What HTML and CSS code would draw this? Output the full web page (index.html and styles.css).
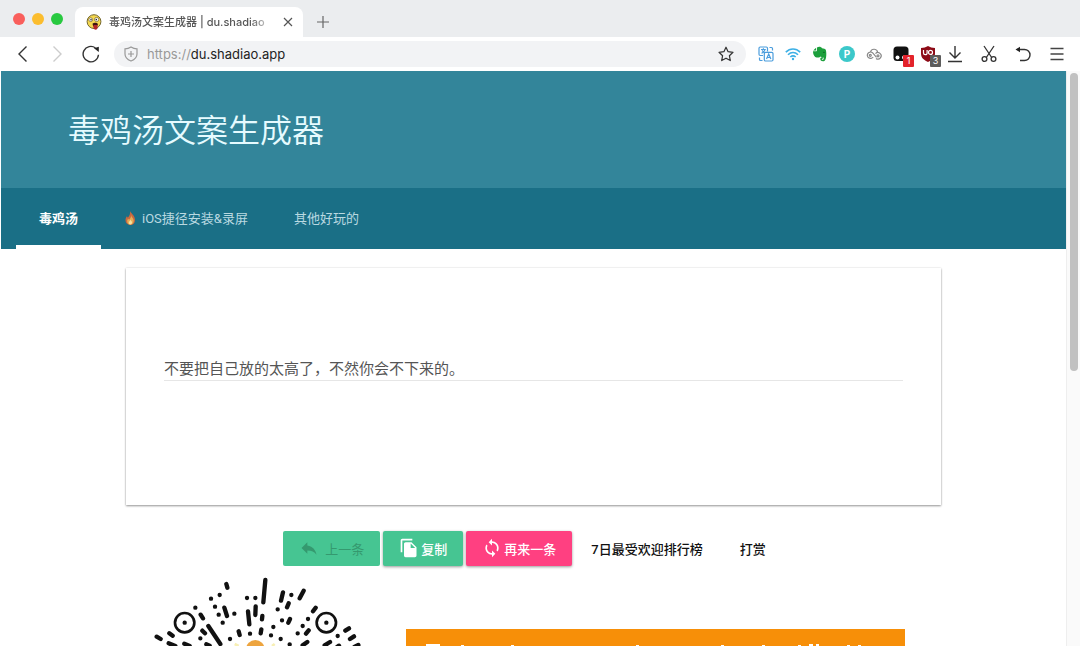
FILE: index.html
```html
<!DOCTYPE html>
<html lang="zh-CN">
<head>
<meta charset="utf-8">
<meta name="viewport" content="width=device-width, initial-scale=1">
<title>毒鸡汤文案生成器</title>
<link rel="stylesheet" href="styles.css">
</head>
<body>
<div class="browser">
  <div class="tabstrip">
    <div class="lights">
      <button class="light light-close" aria-label="关闭窗口"></button>
      <button class="light light-min" aria-label="最小化"></button>
      <button class="light light-max" aria-label="最大化"></button>
    </div>
    <div class="tab">
      <svg class="favicon" viewBox="0 0 16 16" aria-hidden="true">
        <circle cx="8" cy="7.6" r="6.9" fill="#f5d84e" stroke="#75682e" stroke-width="1"/>
        <circle cx="4.700" cy="5.700" r="1.900" fill="#fff" stroke="#5b4822" stroke-width=".6"/>
        <circle cx="10.600" cy="5.500" r="2.100" fill="#fff" stroke="#5b4822" stroke-width=".6"/>
        <circle cx="5" cy="5.800" r=".8" fill="#222"/><circle cx="10.300" cy="5.600" r=".8" fill="#222"/>
        <path d="M6.500 9.700c1.500-1.500 4.500-1 5.500.3l-1 2.600-3.800-.2z" fill="#3d1410"/>
        <path d="M7.500 11h4v3c0 2.300-3.600 2.300-4 0z" fill="#b3262a"/>
      </svg>
      <span class="tab-title">毒鸡汤文案生成器 | du.shadiao</span>
      <button class="icon-btn tab-close" aria-label="关闭标签页">
        <svg width="10" height="10" viewBox="0 0 10 10"><path d="M1 1l8 8M9 1l-8 8" stroke="#555" stroke-width="1.200"/></svg>
      </button>
    </div>
    <button class="icon-btn new-tab" aria-label="新标签页">
      <svg width="12" height="12" viewBox="0 0 12 12"><path d="M6 0v12M0 6h12" stroke="#666" stroke-width="1.200"/></svg>
    </button>
  </div>

  <div class="toolbar">
    <div class="history">
      <button class="icon-btn" aria-label="后退"><svg width="18" height="18" viewBox="0 0 18 18"><path d="M12.500 1.500L5 9l7.500 7.500" fill="none" stroke="#333" stroke-width="1.400"/></svg></button>
      <button class="icon-btn" aria-label="前进"><svg width="18" height="18" viewBox="0 0 18 18"><path d="M5.500 1.500L13 9l-7.500 7.500" fill="none" stroke="#ccc" stroke-width="1.400"/></svg></button>
      <button class="icon-btn" aria-label="刷新"><svg width="18" height="18" viewBox="0 0 18 18"><path d="M16.500 9.800A7.700 7.700 0 1 1 13.500 3" fill="none" stroke="#333" stroke-width="1.400"/><path d="M12 3.200l4.800-1.500v5.200z" fill="#222"/></svg></button>
    </div>
    <div class="address">
      <svg width="14" height="16" viewBox="0 0 14 16" fill="none" stroke="#999" stroke-width="1.200"><path d="M7 1C5 2.300 3 2.800 1 2.800V8c0 3.500 2.500 5.700 6 7 3.500-1.300 6-3.500 6-7V2.800C11 2.800 9 2.300 7 1z"/><path d="M7 5v6M4 8h6"/></svg>
      <div class="url" role="textbox" aria-label="地址" tabindex="0"><span class="scheme">https://</span>du.shadiao.app</div>
      <button class="icon-btn" aria-label="收藏"><svg width="16" height="16" viewBox="0 0 16 16"><path d="M8 1.200l2.100 4.500 4.900.6-3.600 3.400.9 4.900L8 12.200l-4.300 2.400.9-4.900L1 6.300l4.900-.6z" fill="none" stroke="#333" stroke-width="1.200" stroke-linejoin="round"/></svg></button>
    </div>
    <div class="extensions">
      <button class="icon-btn" aria-label="翻译"><svg width="16" height="16" viewBox="0 0 16 16" fill="none" stroke="#4b9ddd" stroke-width="1.200"><path d="M9.500 5.500V2.200Q9.500 1 8.300 1H2.200Q1 1 1 2.200v6.100q0 1.200 1.200 1.200H5M3 3.500h4.800M5.400 2.200v1.300M3.500 7.200c2-.7 3-1.700 3.500-3.500M4 4.500l3 2.700"/><rect x="6.300" y="6.300" width="8.700" height="8.700" rx="1.200"/><path d="M8.500 13l2.200-5 2.200 5M9.300 11.500h2.800M11.500 1.500h2q1 0 1 1v2M1.500 11.500v2q0 1 1 1h2"/></svg></button>
      <button class="icon-btn" aria-label="网络"><svg width="16" height="16" viewBox="0 0 16 16" fill="none" stroke="#3db0e6" stroke-width="1.600"><path d="M.8 6.100c4.200-4.200 10.200-4.200 14.400 0M3 8.700c3-3 7-3 10 0M5.300 11c1.700-1.500 3.700-1.500 5.400 0"/><circle cx="8" cy="13" r="1.200" fill="#3db0e6" stroke="none"/></svg></button>
      <button class="icon-btn" aria-label="笔记"><svg width="16" height="16" viewBox="0 0 16 16"><path d="M5 1.500c2-1.200 4.300-.6 5 .8 3.800.2 4.300 1.700 4.300 5.200 0 4.500-.6 7.800-3.300 7.800-2 0-3-1.200-2.700-2.700.2-1.200 1.700-1.800 2.700-1.200l-.2 1.300c-.8-.2-1.200.2-1 .7.400.6 1.500.5 1.800-.5.200-.8 0-1.500-.8-1.700-1-.2-1.700-.3-2.300-.8-.8 1.500-3.500 1.200-5.300.5C1.700 9.900 1 7.500 1 5.300h2.700c1 0 1.300-.4 1.300-1.300z" fill="#1c9f3c"/><path d="M1.200 4.400L4.100 1.700v2.700z" fill="#1c9f3c"/><path d="M10.800 6.500c.6-1 1.700-1 2 .2z" fill="#084d1a"/></svg></button>
      <button class="icon-btn" aria-label="P"><span class="ext-p">P</span></button>
      <button class="icon-btn" aria-label="云盘"><svg width="16" height="16" viewBox="0 0 16 16" fill="none" stroke="#888" stroke-width="1.200"><path d="M4.500 5.800a3.700 3.700 0 0 1 7.200.8M7.200 11a3.200 3.200 0 1 1-.7-4.300l4 4.600M9.500 7.700a3.200 3.200 0 1 1 .5 4.700"/><circle cx="4.300" cy="9.300" r="1"/><circle cx="12" cy="9.800" r="1"/></svg></button>
      <button class="icon-btn" aria-label="脚本"><svg width="16" height="16" viewBox="0 0 16 16"><rect x=".5" y=".5" width="15" height="14.500" rx="3.500" fill="#111"/><circle cx="4.500" cy="11.500" r="2" fill="#fff"/><circle cx="11" cy="11.500" r="2" fill="#fff"/></svg><span class="badge badge-red">1</span></button>
      <button class="icon-btn" aria-label="拦截"><svg width="16" height="16" viewBox="0 0 16 16"><path d="M8 0c2 1.300 4.300 2 7 2v5.500c0 4.500-3 6.500-7 8.500-4-2-7-4-7-8.500V2c2.700 0 5-.7 7-2z" fill="#8d0b17"/><path d="M3.500 4v3q0 1.700 1.800 1.700T7.100 7V4" fill="none" stroke="#fff" stroke-width="1.200"/><circle cx="10.500" cy="6.400" r="2" fill="none" stroke="#fff" stroke-width="1.200"/></svg><span class="badge badge-gray">3</span></button>
    </div>
    <div class="tools">
      <button class="icon-btn" aria-label="下载"><svg width="16" height="18" viewBox="0 0 16 18" fill="none" stroke="#333" stroke-width="1.400"><path d="M8 1v12M2.500 7.500L8 13l5.500-5.500M1 16.500h14"/></svg></button>
      <button class="icon-btn" aria-label="截图"><svg width="16" height="18" viewBox="0 0 16 18" fill="none" stroke="#333" stroke-width="1.300"><path d="M3 1l7.700 11.500M13 1L5.300 12.500"/><circle cx="3.500" cy="14" r="2.400"/><circle cx="12.500" cy="14" r="2.400"/></svg></button>
      <button class="icon-btn" aria-label="撤销"><svg width="16" height="18" viewBox="0 0 16 18"><path d="M2 4.500h7.500a5.500 5.500 0 0 1 0 11H5" fill="none" stroke="#333" stroke-width="1.400"/><path d="M.5 4.500L5 1.800v5.400z" fill="#222"/></svg></button>
      <button class="icon-btn" aria-label="菜单"><svg width="16" height="18" viewBox="0 0 16 18"><path d="M1.500 3.500h13M1.500 9h13M1.500 14.500h13" stroke="#444" stroke-width="1.400"/></svg></button>
    </div>
  </div>

  <div class="viewport">
    <main class="page">
      <header class="banner"><h1>毒鸡汤文案生成器</h1></header>
      <nav class="nav">
        <a class="nav-item nav-active" href="#soup">毒鸡汤</a>
        <a class="nav-item" href="#ios"><svg class="flame" width="13" height="14" viewBox="0 0 13 14" aria-hidden="true"><path d="M6 0c1 2.500 5 4.500 5 8.700C11 12 9 14 6.300 14 3.500 14 1.500 12 1.500 9.300c0-1.800.6-3 1.500-4l.8 1.400C5.500 5 6.500 2.500 6 0z" fill="#c9683f"/><path d="M7 4c.3 2 2.700 3.200 2.700 5.700 0 2.300-1.400 3.900-3.300 3.900s-3.200-1.500-3.200-3.400c0-1.200.5-1.900 1-2.400l.8 1C6.500 7.500 7.300 5.800 7 4z" fill="#e5ad55"/><path d="M6.500 8.500c.2 1.200 1.500 1.600 1.500 3 0 1.200-.7 1.900-1.600 1.900s-1.600-.7-1.600-1.700c0-1.300 1.400-1.700 1.700-3.200z" fill="#f3e2a0"/></svg>iOS捷径安装&amp;录屏</a>
        <a class="nav-item" href="#more">其他好玩的</a>
      </nav>
      <div class="content">
        <section class="card" id="soup">
          <input class="quote" type="text" aria-label="毒鸡汤" value="不要把自己放的太高了，不然你会不下来的。">
        </section>
        <div class="actions">
          <button class="btn btn-green btn-prev" disabled><svg viewBox="0 0 24 24"><path d="M10 9V5l-7 7 7 7v-4.100c5 0 8.500 1.600 11 5.100-1-5-4-10-11-11z"/></svg>上一条</button>
          <button class="btn btn-green"><svg viewBox="0 0 24 24"><path d="M16 1H4c-1.100 0-2 .9-2 2v14h2V3h12V1zm-1 4l6 6v10c0 1.100-.9 2-2 2H8c-1.100 0-2-.9-2-2V7c0-1.100.9-2 2-2h7zm-1 7h5.500L14 6.500V12z"/></svg>复制</button>
          <button class="btn btn-pink"><svg viewBox="0 0 24 24"><path d="M12 4V1L8 5l4 4V6c3.310 0 6 2.690 6 6 0 1.010-.25 1.970-.7 2.800l1.460 1.460C19.540 15.030 20 13.570 20 12c0-4.420-3.580-8-8-8zm0 14c-3.310 0-6-2.690-6-6 0-1.010.25-1.970.7-2.800L5.240 7.740C4.460 8.970 4 10.430 4 12c0 4.420 3.580 8 8 8v3l4-4-4-4v3z"/></svg>再来一条</button>
          <a class="btn btn-flat" href="#rank">7日最受欢迎排行榜</a>
          <a class="btn btn-flat" href="#tip">打赏</a>
        </div>
        <div class="promo">
          <svg class="code" viewBox="0 0 720 720" role="img" aria-label="小程序码">
            <g fill="none" stroke="#111" stroke-linecap="round" stroke-width="13">
              <circle cx="134" cy="158" r="29" stroke-width="8"/><circle cx="559" cy="158" r="29" stroke-width="8"/>
              <path d="M134 158h.1M559 158h.1M213 86h.1M239 75h.1M166 113h.1M225 110h.1M236 134h.1M283 131h.1M248 158h.1M321 84h.1M346 84h.1M454 75h.1M413 118h.1M426 151h.1M400 171h.1M393 196h.1M330 191h.1M270 207h.1M181 205h.1M422 207h.1M449 223h.1M473 190h.1M488 168h.1M504 147h.1M593 198h.1"/>
              <path d="M259 42l3 11M376 30l-6 67M429 67l-6 25M491 62l-12 23M446 100l-5 12M527 113l-8 11M253 113l8 25M324 124l4 39M347 109l-1 26M367 138l-1 10M182 134l7 11M296 184l3 11M364 178l-2 12M450 147l-5 11M205 168l36 54M187 182l8 8M50 200l12 7M88 190l10 7M86 220l20 8M133 221l16 7M199 223l10 4M506 181l-8 10M627 175l-11 7M642 199l-12 8M502 216l-14 10M570 216l-16 10M655 225l-12 6M597 227l-6 4"/>
            </g>
            <circle cx="346" cy="238" r="28" fill="#eda43e"/>
            <path d="M284 222l12 6M404 222l-8 6" stroke="#f7efb4" stroke-width="8"/>
          </svg>
          <div class="ad">
            <svg viewBox="0 0 499 80" aria-hidden="true"><path d="M20 15h14v3H20zM55 16h3v3h-3zM105 16h3v3h-3zM230 16h3v3h-3zM315 16h3v3h-3zM356 16h3v3h-3zM392 16h3v3h-3zM403 15h4v3h-4zM410 15h3v3h-3zM441 16h3v3h-3zM452 16h3v3h-3z" fill="#fff"/></svg>
          </div>
        </div>
      </div>
    </main>
    <div class="scrollbar"><div class="thumb"></div></div>
  </div>
</div>
</body>
</html>
```
FILE: styles.css
```css
* { box-sizing: border-box; }

body {
  margin: 0;
  background: #fff;
  color: #222;
  font-family: Roboto, "Noto Sans CJK SC", sans-serif;
  font-size: 13px;
}

button { font: inherit; border: 0; padding: 0; background: none; }
a { color: inherit; text-decoration: none; }
svg { display: block; flex: none; }

.browser { display: flex; flex-direction: column; height: 100vh; overflow: hidden; }

.tabstrip {
  display: flex;
  align-items: flex-end;
  flex: none;
  height: 37px;
  padding-left: 13px;
  background: #ebedef;
}
.lights { display: flex; gap: 7px; margin: 0 12px 12px 0; }
.light { width: 12px; height: 12px; border-radius: 50%; }
.light-close { background: #f95f5c; }
.light-min { background: #fbbd2e; }
.light-max { background: #28c940; }

.tab {
  display: flex;
  align-items: center;
  width: 228px;
  height: 30px;
  padding: 0 10px 0 11px;
  border-radius: 8px 8px 0 0;
  background: #fff;
}
.favicon { width: 16px; height: 16px; }
.tab-title {
  flex: 1;
  min-width: 0;
  margin: 0 8px 0 7px;
  white-space: nowrap;
  font: 500 11px/18px Inter, "Noto Sans CJK SC", sans-serif;
  color: #555;
  mask-image: linear-gradient(to right, #000 85%, transparent);
}
.icon-btn { position: relative; display: flex; align-items: center; justify-content: center; flex: none; }
.new-tab { align-self: center; margin-left: 14px; padding-top: 7px; }

.toolbar { display: flex; align-items: center; flex: none; height: 34px; padding: 0 15px 0 14px; background: #fff; }
.history { display: flex; gap: 16px; }
.address {
  display: flex;
  align-items: center;
  flex: 1;
  height: 26px;
  margin: 0 12px 0 14px;
  padding: 0 12px 0 10px;
  border-radius: 13px;
  background: #f2f3f5;
}
.url { flex: 1; margin-left: 9px; font: 13px/18px Inter, sans-serif; color: #222; }
.scheme { color: #999; }
.extensions { display: flex; gap: 11px; margin-right: 11px; }
.ext-p {
  width: 16px;
  height: 16px;
  border-radius: 50%;
  background: #3cc8ca;
  color: #fff;
  font: bold 10px/16px Inter, sans-serif;
}
.badge {
  position: absolute;
  right: -5px;
  bottom: -5px;
  width: 11px;
  height: 12px;
  border-radius: 1px;
  color: #fff;
  font: 9px/12px Inter, sans-serif;
}
.badge-red { background: #e3232b; }
.badge-gray { background: #5c5c5c; }
.tools { display: flex; gap: 18px; }

.viewport { display: flex; flex: 1; min-height: 0; padding: 0 0 1px 1px; }
.page { flex: 1; min-width: 0; overflow: hidden; }
.scrollbar { flex: none; width: 14px; padding: 2px 2px 0 3px; border-left: 1px solid #eee; background: #fafafa; }
.thumb { height: 52%; border-radius: 4px; background: #c1c1c1; }

.banner { padding: 37px 67px 33px; background: #33859a; }
.banner h1 { margin: 0; font-size: 32px; line-height: 47px; font-weight: 350; color: #e6fbff; }

.nav { display: flex; padding-left: 15px; background: #1a6f86; }
.nav-item {
  display: flex;
  align-items: center;
  height: 61px;
  padding: 2px 23px 0;
  border-bottom: 4px solid transparent;
  color: #b9d9e1;
}
.nav-active { border-color: #fff; color: #fff; font-weight: 700; }
.flame { margin-right: 5px; }

.content { padding: 19px 125px 0; }
.card {
  padding: 89px 38px 124px;
  background: #fff;
  box-shadow: 0 1px 2px rgba(0, 0, 0, .4), 0 0 2px rgba(0, 0, 0, .1);
}
.quote {
  display: block;
  width: 100%;
  height: 24px;
  padding: 0 0 3px;
  border: 0;
  border-bottom: 1px solid #e6e6e6;
  outline: 0;
  background: none;
  color: #555;
  font: 15px/20px "Noto Sans CJK SC", sans-serif;
}

.actions { display: flex; justify-content: center; gap: 3px; margin-top: 26px; }
.btn {
  display: flex;
  align-items: center;
  gap: 2px;
  height: 35px;
  padding: 0 16px 1px;
  border-radius: 2px;
  color: #fff;
  font-weight: 500;
  white-space: nowrap;
}
.btn svg { width: 20px; height: 20px; fill: currentColor; }
.btn-green { background: #46c592; box-shadow: 0 1px 3px rgba(0, 0, 0, .4); }
.btn-pink { background: #ff4081; box-shadow: 0 1px 3px rgba(0, 0, 0, .4); }
.btn-prev { gap: 6px; box-shadow: none; color: #35996f; font-weight: 400; }
.btn-flat { padding: 0 18px 1px 16px; color: #111; }

.promo { display: flex; align-items: flex-start; gap: 26px; margin-top: 4px; padding: 0 36px 0 14px; }
.code { width: 240px; height: 240px; }
.ad { flex: 1; margin-top: 59px; background: #f78f08; }
```
